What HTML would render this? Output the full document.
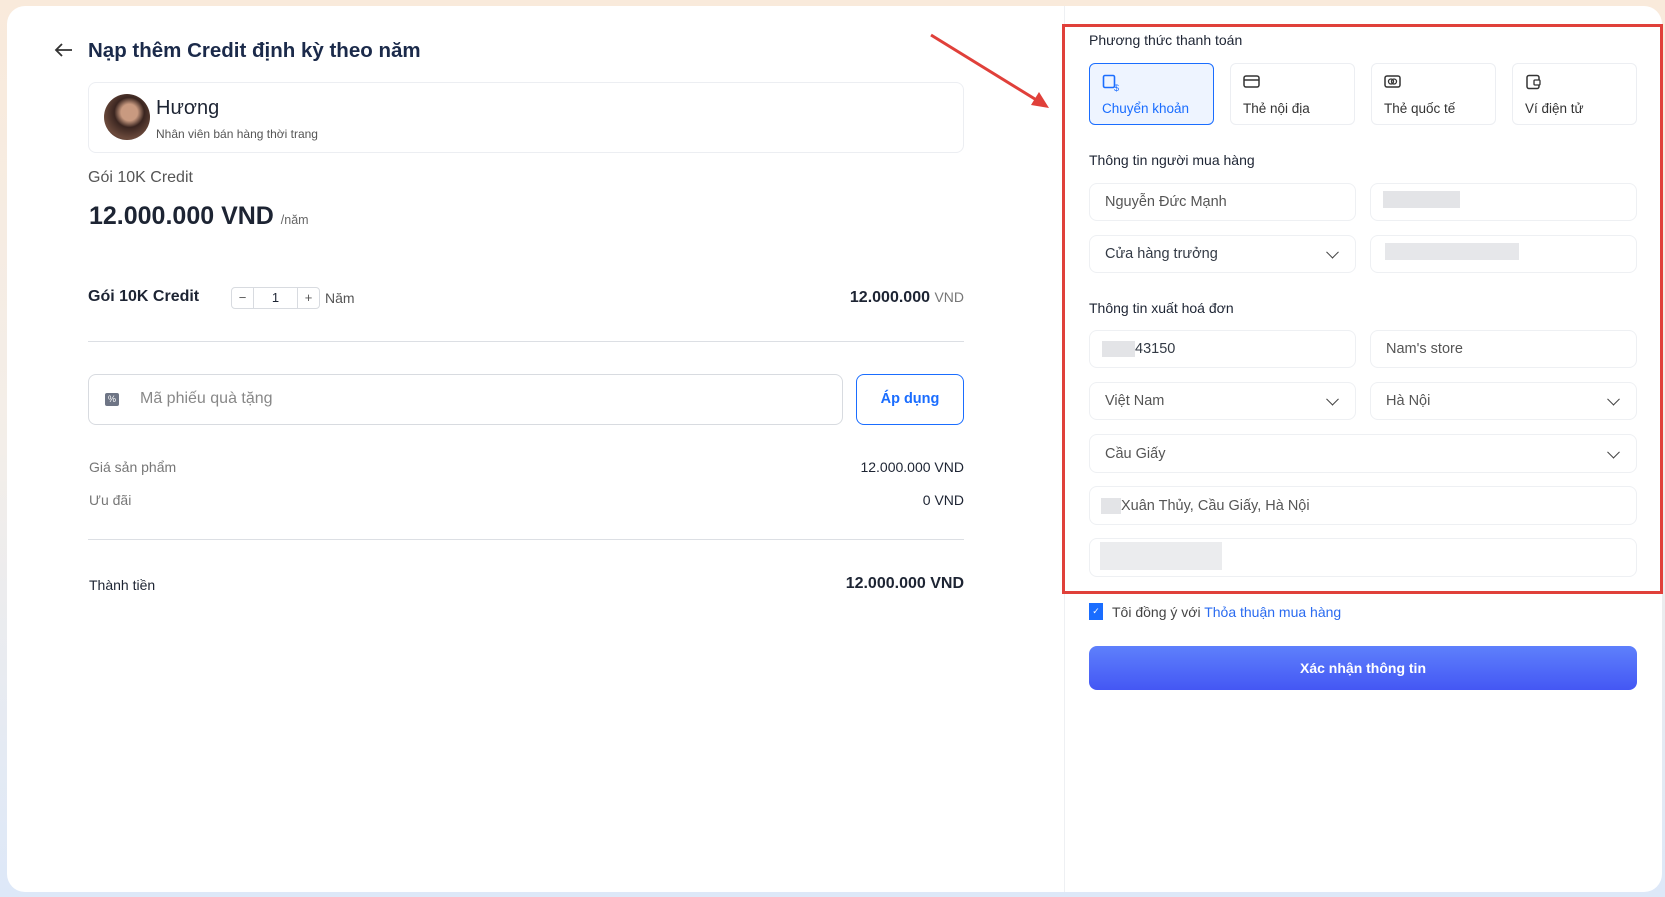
<!DOCTYPE html>
<html><head><meta charset="utf-8"><style>
*{box-sizing:border-box;margin:0;padding:0}
body{width:1665px;height:897px;overflow:hidden;font-family:"Liberation Sans",sans-serif;background:linear-gradient(180deg,#f9eadb 0%,#f3eee9 50%,#dde8f8 100%);position:relative;color:#1d2433}
.card{position:absolute;left:7px;top:6px;width:1655px;height:886px;background:#fff;border-radius:18px}
.abs{position:absolute}
.box{position:absolute;border:1px solid #eceef2;border-radius:8px;background:#fff}
.inp{position:absolute;border:1px solid #eef0f3;border-radius:8px;background:#fff;font-size:14.5px;color:#333a45;padding-left:15px;display:flex;align-items:center}
.chev{position:absolute;right:18px;top:50%;width:9px;height:9px;border-right:1.6px solid #444;border-bottom:1.6px solid #444;transform:translateY(-70%) rotate(45deg)}
.pay{position:absolute;top:63px;width:125px;height:62px;border:1px solid #eceef2;border-radius:6px;font-size:13.5px;color:#333}
.pay span{position:absolute;left:12px;top:37px}
.pay svg{position:absolute;left:12px;top:10px}
.blur{position:absolute;background:#e3e4e7}
</style></head><body>
<div class="card"></div>
<!-- left -->
<svg class="abs" style="left:54px;top:42px" width="20" height="16" viewBox="0 0 20 16"><path d="M18 8H3M8 2L2 8l6 6" fill="none" stroke="#333" stroke-width="1.8"/></svg>
<div class="abs" style="left:88px;top:39px;font-size:20.5px;font-weight:bold;color:#1b2a4a">Nạp thêm Credit định kỳ theo năm</div>
<div class="box" style="left:88px;top:82px;width:876px;height:71px"></div>
<div class="abs" style="left:104px;top:94px;width:46px;height:46px;border-radius:50%;background:radial-gradient(circle at 55% 40%,#c99a80 0 22%,#3a2520 40%,#6b4a3c 70%,#2a1a16 100%)"></div>
<div class="abs" style="left:156px;top:97px;font-size:20px;color:#1d2433">Hương</div>
<div class="abs" style="left:156px;top:127px;font-size:12px;color:#555">Nhân viên bán hàng thời trang</div>
<div class="abs" style="left:88px;top:169px;font-size:16px;color:#555">Gói 10K Credit</div>
<div class="abs" style="left:89px;top:202px;font-size:25px;font-weight:bold;color:#1d2433">12.000.000 VND <span style="font-size:12.5px;font-weight:normal;color:#666">/năm</span></div>
<div class="abs" style="left:88px;top:288px;font-size:16px;font-weight:bold">Gói 10K Credit</div>
<div class="abs" style="left:231px;top:287px;width:89px;height:22px;border:1px solid #d8dbe0;border-radius:4px;font-size:13px">
 <div class="abs" style="left:0;top:0;width:22px;height:20px;border-right:1px solid #d8dbe0;text-align:center;line-height:20px;color:#555">−</div>
 <div class="abs" style="left:22px;top:0;width:43px;height:20px;text-align:center;line-height:20px">1</div>
 <div class="abs" style="left:65px;top:0;width:22px;height:20px;border-left:1px solid #d8dbe0;text-align:center;line-height:20px;color:#555">+</div>
</div>
<div class="abs" style="left:325px;top:290px;font-size:14px;color:#555">Năm</div>
<div class="abs" style="right:701px;top:289px;font-size:16px;font-weight:bold">12.000.000 <span style="font-size:14px;font-weight:normal;color:#777">VND</span></div>
<div class="abs" style="left:88px;top:341px;width:876px;height:1px;background:#dcdfe4"></div>
<div class="box" style="left:88px;top:374px;width:755px;height:51px;border-color:#d8dbe0"></div>
<div class="abs" style="left:105px;top:393px;width:14px;height:13px;background:#6e7585;border-radius:2px;color:#fff;font-size:9px;text-align:center;line-height:13px">%</div>
<div class="abs" style="left:140px;top:390px;font-size:16px;color:#888">Mã phiếu quà tặng</div>
<div class="abs" style="left:856px;top:374px;width:108px;height:51px;border:1.5px solid #1a6dff;border-radius:8px;color:#1a6dff;font-size:14.5px;font-weight:bold;text-align:center;line-height:48px">Áp dụng</div>
<div class="abs" style="left:89px;top:459px;font-size:14px;color:#777">Giá sản phẩm</div>
<div class="abs" style="right:701px;top:459px;font-size:14px;color:#1d2433">12.000.000 VND</div>
<div class="abs" style="left:89px;top:492px;font-size:14px;color:#777">Ưu đãi</div>
<div class="abs" style="right:701px;top:492px;font-size:14px">0 VND</div>
<div class="abs" style="left:88px;top:539px;width:876px;height:1px;background:#dcdfe4"></div>
<div class="abs" style="left:89px;top:577px;font-size:14px">Thành tiền</div>
<div class="abs" style="right:701px;top:575px;font-size:16px;font-weight:bold">12.000.000 VND</div>
<!-- arrow -->
<svg class="abs" style="left:925px;top:30px" width="130" height="85"><line x1="6" y1="5" x2="118" y2="74" stroke="#e0403a" stroke-width="3"/><path d="M124 78L106 75L114 62Z" fill="#e0403a"/></svg>
<!-- right -->
<div class="abs" style="left:1064px;top:6px;width:1px;height:886px;background:#eef0f3"></div>
<div class="abs" style="left:1062px;top:24px;width:601px;height:570px;border:3px solid #e0403a"></div>
<div class="abs" style="left:1089px;top:32px;font-size:14px">Phương thức thanh toán</div>
<div class="pay" style="left:1089px;border:1.5px solid #1a6dff;background:#eef4ff;color:#1a6dff"><svg width="20" height="18"><rect x="1.5" y="1.5" width="11" height="12" rx="1.5" fill="none" stroke="#1a6dff" stroke-width="1.6"/><text x="12" y="17" font-size="9" fill="#1a6dff" font-family="Liberation Sans">$</text></svg><span>Chuyển khoản</span></div>
<div class="pay" style="left:1230px"><svg width="18" height="16"><rect x="1" y="2" width="15" height="11" rx="2" fill="none" stroke="#333" stroke-width="1.5"/><line x1="1" y1="6" x2="16" y2="6" stroke="#333" stroke-width="1.5"/></svg><span>Thẻ nội địa</span></div>
<div class="pay" style="left:1371px"><svg width="18" height="16"><rect x="1" y="2" width="15" height="11" rx="2" fill="none" stroke="#333" stroke-width="1.5"/><circle cx="7" cy="7.5" r="2.5" fill="none" stroke="#333" stroke-width="1.3"/><circle cx="10" cy="7.5" r="2.5" fill="none" stroke="#333" stroke-width="1.3"/></svg><span>Thẻ quốc tế</span></div>
<div class="pay" style="left:1512px"><svg width="18" height="16"><rect x="2" y="1.5" width="12" height="13" rx="2" fill="none" stroke="#333" stroke-width="1.5"/><rect x="9" y="6" width="6" height="5" rx="1" fill="#fff" stroke="#333" stroke-width="1.3"/></svg><span>Ví điện tử</span></div>
<div class="abs" style="left:1089px;top:152px;font-size:14px">Thông tin người mua hàng</div>
<div class="inp" style="left:1089px;top:183px;width:267px;height:38px;color:#555">Nguyễn Đức Mạnh</div>
<div class="inp" style="left:1370px;top:183px;width:267px;height:38px"><div class="blur" style="left:12px;top:7px;width:77px;height:17px"></div></div>
<div class="inp" style="left:1089px;top:235px;width:267px;height:38px">Cửa hàng trưởng<div class="chev"></div></div>
<div class="inp" style="left:1370px;top:235px;width:267px;height:38px"><div class="blur" style="left:14px;top:7px;width:134px;height:17px;background:#e6e7ea"></div></div>
<div class="abs" style="left:1089px;top:300px;font-size:14px">Thông tin xuất hoá đơn</div>
<div class="inp" style="left:1089px;top:330px;width:267px;height:38px"><span style="display:inline-block;width:33px;height:16px;background:#e3e4e7;margin-left:-3px"></span>43150</div>
<div class="inp" style="left:1370px;top:330px;width:267px;height:38px;color:#555">Nam's store</div>
<div class="inp" style="left:1089px;top:382px;width:267px;height:38px;color:#555">Việt Nam<div class="chev"></div></div>
<div class="inp" style="left:1370px;top:382px;width:267px;height:38px;color:#555">Hà Nội<div class="chev"></div></div>
<div class="inp" style="left:1089px;top:434px;width:548px;height:39px;color:#555">Cầu Giấy<div class="chev"></div></div>
<div class="inp" style="left:1089px;top:486px;width:548px;height:39px;color:#555;padding-left:11px"><span style="display:inline-block;width:20px;height:16px;background:#e3e4e7"></span>Xuân Thủy, Cầu Giấy, Hà Nội</div>
<div class="inp" style="left:1089px;top:538px;width:548px;height:39px"><div class="blur" style="left:10px;top:3px;width:122px;height:28px;background:#ebecee"></div></div>
<div class="abs" style="left:1089px;top:603px;width:14px;height:17px;background:#1a6dff;color:#fff;font-size:9px;text-align:center;line-height:17px">✓</div>
<div class="abs" style="left:1112px;top:604px;font-size:14px;color:#444">Tôi đồng ý với <span style="color:#2a6bf0">Thỏa thuận mua hàng</span></div>
<div class="abs" style="left:1089px;top:646px;width:548px;height:44px;border-radius:8px;background:linear-gradient(180deg,#5e80fc,#4457f4);color:#fff;font-size:14px;font-weight:bold;text-align:center;line-height:44px">Xác nhận thông tin</div>
</body></html>
